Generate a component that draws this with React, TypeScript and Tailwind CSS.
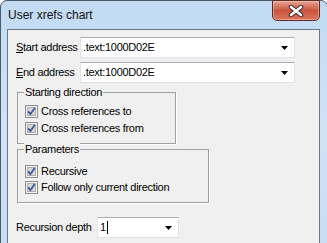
import React from 'react'

const font = "font-['Liberation_Sans',Arial,sans-serif]"

const Caret = () => (
  <svg width="7" height="4" viewBox="0 0 7 4" className="shrink-0">
    <path d="M0 0h7L3.5 4z" fill="#000" />
  </svg>
)

const Check = () => (
  <svg width="13" height="13" viewBox="0 0 13 13" className="shrink-0">
    <rect x="0.5" y="0.5" width="12" height="12" fill="#f4f4f4" stroke="#8e8f8f" />
    <rect x="1.5" y="1.5" width="10" height="10" fill="#dcdcdc" stroke="#f4f4f4" />
    <rect x="2.5" y="2.5" width="8" height="8" fill="#d8d8d8" stroke="#b0b0b0" />
    <path d="M3.2 6.4l2.2 2.6 4.4-6" fill="none" stroke="#3d56a3" strokeWidth="1.8" />
  </svg>
)

const Combo = ({ value, className }: { value: React.ReactNode; className: string }) => (
  <div
    className={`flex items-center h-[21px] bg-white border border-[#e2e3ea] border-t-[#abadb3] pl-[2px] pr-[6px] ${className}`}
  >
    <span className="flex-1 leading-[13px]">{value}</span>
    <Caret />
  </div>
)

const CheckRow = ({ label }: { label: string }) => (
  <div className="flex items-center gap-[3px] h-[13px]">
    <Check />
    <span className="leading-[13px]">{label}</span>
  </div>
)

const Group = ({
  title,
  className,
  children
}: {
  title: string
  className: string
  children: React.ReactNode
}) => (
  <div className={`relative border border-[#a0a0a0] shadow-[1px_1px_0_#fff] ${className}`}>
    <span className="absolute -top-[7px] left-[6px] px-px bg-[#f0f0f0] leading-[13px]">{title}</span>
    {children}
  </div>
)

export default function App() {
  return (
    <div className={`w-[327px] h-[243px] overflow-hidden bg-white ${font}`}>
      <div className="w-[328px] h-[260px] rounded-t-[7px] border border-[#4b5a6b] bg-gradient-to-b from-[#c2dbf3] via-[#cfe3f7] to-[#c7ddf4]">
        <div className="relative h-[28px] flex items-center pl-[7px] pb-[1px]">
          <span className="text-[12px] text-[#111]">User xrefs chart</span>
          <div className="absolute top-[-1px] left-[271px] w-[48px] h-[21px] rounded-b-[5px] border border-[#5e2a22] bg-gradient-to-b from-[#e6a596] via-[#c9533b] to-[#d9765f] flex items-center justify-center shadow-[inset_0_0_0_1px_rgba(255,220,210,0.45)]">
            <svg width="16" height="12" viewBox="0 0 16 12">
              <path d="M3 2l10 8M13 2L3 10" stroke="#3a2a2a" strokeWidth="4.5" strokeLinecap="round" />
              <path d="M3 2l10 8M13 2L3 10" stroke="#fff" strokeWidth="2.6" strokeLinecap="round" />
            </svg>
          </div>
        </div>
        <div className="ml-[6px] w-[313px] h-[240px] border border-[#6a7888] bg-[#f0f0f0] text-[11px] tracking-[-0.3px] text-black pt-[7px] pl-[8px]">
          <div className="flex items-center">
            <span className="w-[64px]">
              <u>S</u>tart address
            </span>
            <Combo value=".text:1000D02E" className="w-[215px]" />
          </div>
          <div className="flex items-center mt-[4px]">
            <span className="w-[64px]">
              <u>E</u>nd address
            </span>
            <Combo value=".text:1000D02E" className="w-[215px]" />
          </div>
          <Group title="Starting direction" className="ml-[1px] mt-[9px] w-[159px] h-[52px] pt-[12px] pl-[7px]">
            <div className="flex flex-col gap-[4px]">
              <CheckRow label="Cross references to" />
              <CheckRow label="Cross references from" />
            </div>
          </Group>
          <Group title="Parameters" className="ml-[1px] mt-[5px] w-[192px] h-[54px] pt-[15px] pl-[7px]">
            <div className="flex flex-col gap-[3px]">
              <CheckRow label="Recursive" />
              <CheckRow label="Follow only current direction" />
            </div>
          </Group>
          <div className="flex items-center mt-[14px]">
            <span className="w-[81px]">Recursion depth</span>
            <Combo
              value={
                <span className="flex items-center">
                  1<span className="inline-block w-px h-[13px] bg-black ml-px" />
                </span>
              }
              className="w-[82px]"
            />
          </div>
        </div>
      </div>
    </div>
  )
}
